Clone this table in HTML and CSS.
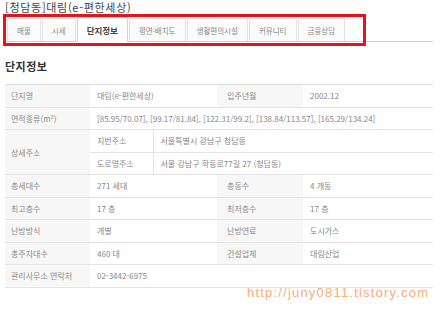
FILE: index.html
```html
<!DOCTYPE html>
<html lang="ko">
<head>
<meta charset="utf-8">
<title>단지정보</title>
<link rel="stylesheet" href="styles.css">
</head>
<body>
<div class="page">
  <h1 class="title">[청담동]대림(e-편한세상)</h1>
  <ul class="tabs">
    <li class="tab">매물</li>
    <li class="tab">시세</li>
    <li class="tab tab-active">단지정보</li>
    <li class="tab">평면·배치도</li>
    <li class="tab">생활편의시설</li>
    <li class="tab">커뮤니티</li>
    <li class="tab">금융상담</li>
  </ul>
  <h2 class="heading">단지정보</h2>
  <table class="info">
    <colgroup>
      <col class="c-label">
      <col class="c-sub">
      <col class="c-rest">
      <col class="c-label2">
      <col>
    </colgroup>
    <tbody>
      <tr>
        <th class="lbl first">단지명</th>
        <td colspan="2">대림(e-편한세상)</td>
        <th class="lbl">입주년월</th>
        <td>2002.12</td>
      </tr>
      <tr>
        <th class="lbl first">면적종류(m²)</th>
        <td colspan="4">[85.95/70.07], [99.17/81.84], [122.31/99.2], [138.84/113.57], [165.29/134.24]</td>
      </tr>
      <tr>
        <th class="lbl first" rowspan="2">상세주소</th>
        <td class="sub">지번주소</td>
        <td colspan="3">서울특별시 강남구 청담동</td>
      </tr>
      <tr>
        <td class="sub">도로명주소</td>
        <td colspan="3">서울 강남구 학동로77길 27 (청담동)</td>
      </tr>
      <tr>
        <th class="lbl first">총세대수</th>
        <td colspan="2">271 세대</td>
        <th class="lbl">총동수</th>
        <td>4 개동</td>
      </tr>
      <tr>
        <th class="lbl first">최고층수</th>
        <td colspan="2">17 층</td>
        <th class="lbl">최저층수</th>
        <td>17 층</td>
      </tr>
      <tr>
        <th class="lbl first">난방방식</th>
        <td colspan="2">개별</td>
        <th class="lbl">난방연료</th>
        <td>도시가스</td>
      </tr>
      <tr>
        <th class="lbl first">총주차대수</th>
        <td colspan="2">460 대</td>
        <th class="lbl">건설업체</th>
        <td>대림산업</td>
      </tr>
      <tr>
        <th class="lbl first">관리사무소 연락처</th>
        <td colspan="4">02-3442-6975</td>
      </tr>
    </tbody>
  </table>
</div>
<div class="highlight"></div>
<div class="watermark">http://juny0811.tistory.com</div>
</body>
</html>
```
FILE: styles.css
```css
* { box-sizing: border-box; }
html, body { margin: 0; padding: 0; background: #fff; }
body {
  position: relative;
  width: 441px;
  height: 313px;
  overflow: hidden;
  font-family: "Noto Sans CJK KR", "Noto Sans", sans-serif;
  color: #888;
}
.page { padding: 1px 8px 0 5px; }
.title {
  margin: 0;
  font-size: 11px;
  line-height: 13px;
  font-weight: normal;
  color: #444;
  letter-spacing: 0.7px;
}
.tabs {
  list-style: none;
  margin: 3px 0 0 0;
  padding: 0 0 0 2px;
  display: flex;
  align-items: flex-end;
  gap: 1px;
  height: 25px;
  border-bottom: 1px solid #cfcfcf;
}
.tab {
  height: 23px;
  padding: 0 9px;
  display: flex;
  align-items: center;
  justify-content: center;
  font-size: 7.5px;
  color: #8a8a8a;
  background: #fbfbfb;
  border: 1px solid #e2e2e2;
  border-bottom: none;
  white-space: nowrap;
}
.tab-active {
  height: 25px;
  margin-bottom: -1px;
  background: #fff;
  border-color: #d6d6d6;
  color: #444;
  font-size: 8.5px;
  font-weight: bold;
  position: relative;
}
.heading {
  margin: 17px 0 0 0;
  font-size: 11px;
  line-height: 14px;
  font-weight: bold;
  color: #333;
  letter-spacing: 0.5px;
}
.info {
  margin-top: 11px;
  width: 428px;
  table-layout: fixed;
  border-collapse: collapse;
  border-top: 1px solid #dcdcdc;
  font-size: 8px;
}
.c-label { width: 85px; }
.c-sub { width: 63px; }
.c-rest { width: 64px; }
.c-label2 { width: 86px; }
.info th, .info td {
  height: 22.5px;
  padding: 0 0 0 7px;
  text-align: left;
  font-weight: normal;
  border-bottom: 1px solid #e4e4e4;
  white-space: nowrap;
  overflow: hidden;
}
.info td { color: #888; background: #fff; }
.info .lbl { background: #f7f7f7; color: #8c8c8c; padding-left: 10px; }
.info .lbl.first { padding-left: 6px; }
.info .sub { border-right: 1px solid #e4e4e4; color: #8c8c8c; }
.highlight {
  position: absolute;
  left: 3px;
  top: 14px;
  width: 363px;
  height: 32px;
  border: 3px solid #e5141c;
}
.watermark {
  position: absolute;
  left: 247px;
  top: 285px;
  font-family: "Liberation Sans", sans-serif;
  font-size: 13px;
  letter-spacing: 1.2px;
  color: #f9ac76;
  white-space: nowrap;
}
```
